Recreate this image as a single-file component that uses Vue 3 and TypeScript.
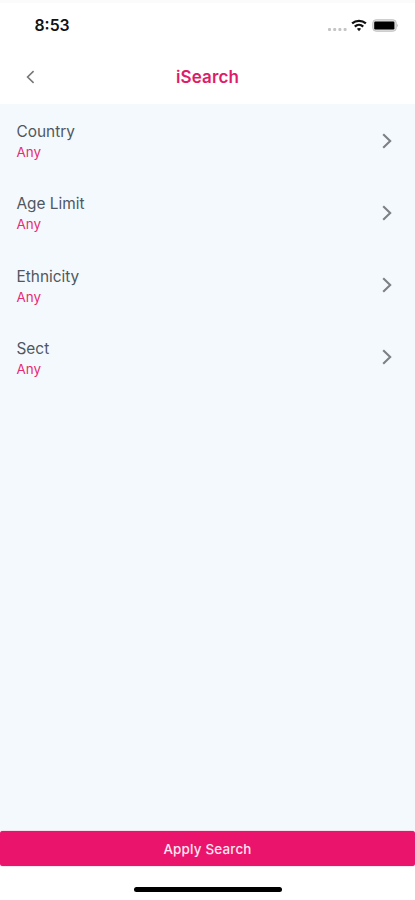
<script setup lang="ts">
import { ref } from 'vue'

interface Filter {
  label: string
  value: string
}

const filters = ref<Filter[]>([
  { label: 'Country', value: 'Any' },
  { label: 'Age Limit', value: 'Any' },
  { label: 'Ethnicity', value: 'Any' },
  { label: 'Sect', value: 'Any' },
])
</script>

<template>
  <div class="screen">
    <div class="status">
      <span class="time">8:53</span>
      <svg class="indicators" width="72" height="16" viewBox="0 0 72 16">
        <g fill="#c4c4c4">
          <rect x="1" y="11" width="3" height="3" rx="1" />
          <rect x="6.2" y="11" width="3" height="3" rx="1" />
          <rect x="11.4" y="11" width="3" height="3" rx="1" />
          <rect x="16.6" y="11" width="3" height="3" rx="1" />
        </g>
        <g fill="none" stroke="#111" stroke-width="2.3">
          <path d="M25.1 6.4a10.6 10.6 0 0 1 13.8 0" />
          <path d="M27.8 9.6a6.2 6.2 0 0 1 8.4 0" />
        </g>
        <path d="M29.9 11.8a3.2 3.2 0 0 1 4.2 0l-2.1 2.5z" fill="#111" />
        <rect x="45.7" y="2.7" width="23.6" height="11.6" rx="3.5" fill="#ddd" stroke="#c4c4c4" stroke-width="1" />
        <rect x="47.2" y="4.5" width="20.2" height="8" rx="1.2" fill="#000" />
        <path d="M70.3 6.7q1.6 1.8 0 3.6z" fill="#aaa" />
      </svg>
    </div>
    <header class="header">
      <button class="back" aria-label="Back">
        <svg width="9" height="14" viewBox="0 0 9 14">
          <path d="M7.6 1.2 1.6 7l6 5.8" fill="none" stroke="#777" stroke-width="1.6" />
        </svg>
      </button>
      <h1 class="title">iSearch</h1>
    </header>
    <main class="filters">
      <button v-for="filter in filters" :key="filter.label" class="row">
        <span class="texts">
          <span class="label">{{ filter.label }}</span>
          <span class="value">{{ filter.value }}</span>
        </span>
        <svg width="10" height="16" viewBox="0 0 10 16">
          <path d="M1.2 1.2 8.2 8l-7 6.8" fill="none" stroke="#7d8084" stroke-width="2.1" />
        </svg>
      </button>
    </main>
    <footer class="footer">
      <button class="apply">Apply Search</button>
      <div class="home"></div>
    </footer>
  </div>
</template>

<style>
body {
  margin: 0;
}
</style>

<style scoped>
.screen {
  display: flex;
  flex-direction: column;
  height: 900px;
  box-sizing: border-box;
  background: #fff;
  font-family: Inter, 'Liberation Sans', sans-serif;
}
button {
  border: 0;
  padding: 0;
  background: none;
  font: inherit;
  text-align: left;
}
svg {
  display: block;
}
.status {
  display: flex;
  justify-content: space-between;
  align-items: center;
  height: 50px;
  padding: 0 16px 3px 34.5px;
  box-sizing: border-box;
  border-top: 3px solid #fbfbfb;
}
.time {
  padding-top: 2px;
  font-size: 15.8px;
  font-weight: 600;
  line-height: 20px;
  color: #111;
}
.header {
  display: grid;
  grid-template-columns: 60px 1fr 60px;
  align-items: center;
  height: 54px;
}
.back {
  padding-left: 26px;
}
.title {
  margin: 0;
  text-align: center;
  font-size: 17px;
  font-weight: 600;
  line-height: 22px;
  letter-spacing: 0.15px;
  color: #de1c68;
}
.filters {
  flex: 1;
  background: #f4f9fd;
}
.row {
  display: flex;
  justify-content: space-between;
  align-items: center;
  width: 100%;
  height: 72.25px;
  padding: 1px 23px 0 16.5px;
  box-sizing: border-box;
}
.texts {
  display: flex;
  flex-direction: column;
  padding-top: 2px;
}
.label {
  font-size: 15.4px;
  line-height: 22px;
  color: #50575e;
}
.value {
  font-size: 13.4px;
  line-height: 19px;
  color: #e62c74;
}
.footer {
  height: 69px;
  display: flex;
  flex-direction: column;
  align-items: center;
  background: linear-gradient(#f4f9fd 6px, #fff 6px);
}
.apply {
  width: 100%;
  height: 35px;
  border-radius: 3px;
  background: #eb146c;
  box-shadow: 0 0 1px #eb146c;
  text-align: center;
  font-size: 13.4px;
  font-weight: 500;
  letter-spacing: 0.2px;
  color: #ffe6ef;
}
.home {
  width: 148px;
  height: 5px;
  margin-top: 21px;
  border-radius: 3px;
  background: #000;
}
</style>
